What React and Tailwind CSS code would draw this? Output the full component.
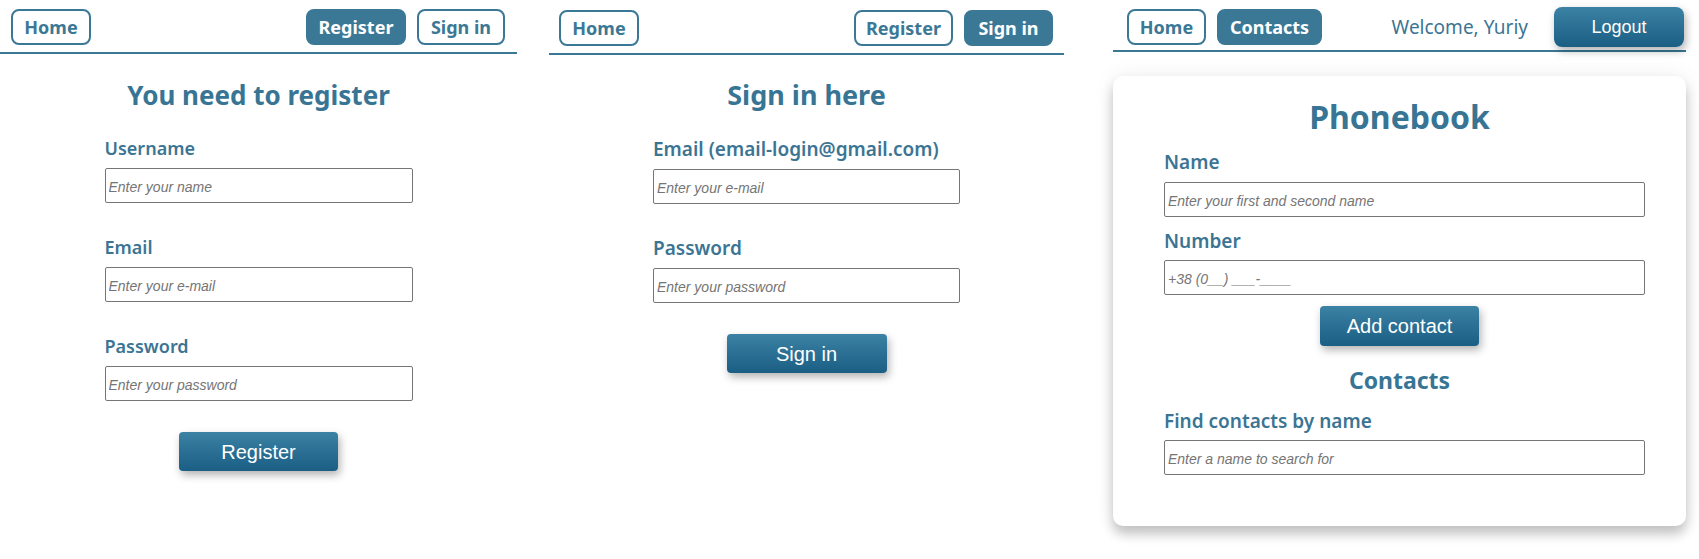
import React from 'react';

const ui = { fontFamily: '"Noto Sans", "Open Sans", sans-serif' };
const arial = { fontFamily: '"Liberation Sans", Arial, sans-serif' };

function NavLink({ children, active, className = '' }) {
  return (
    <a
      href="#"
      style={ui}
      className={`h-[36px] flex items-center justify-center rounded-lg border-2 border-[#3b7896] text-[18px] font-bold leading-none ${
        active ? 'bg-[#3b7896] text-white' : 'bg-white text-[#3b7896]'
      } ${className}`}
    >
      {children}
    </a>
  );
}

function Field({ label, placeholder, labelClass = 'mb-2 text-[18px]', className = '' }) {
  return (
    <label className={`flex flex-col ${className}`}>
      <span style={ui} className={`font-semibold leading-[24px] text-[#3b7593] ${labelClass}`}>
        {label}
      </span>
      <input
        type="text"
        placeholder={placeholder}
        style={arial}
        className="h-[35px] w-full rounded-[2px] border border-[#767676] bg-white pl-[3px] pt-[2px] text-[14px] text-gray-800 outline-none placeholder:italic placeholder:text-[#757575]"
      />
    </label>
  );
}

function BlueButton({ children, className = '' }) {
  return (
    <button
      style={arial}
      className={`rounded-[4px] bg-gradient-to-b from-[#3b82a4] to-[#1a5e84] text-white shadow-[2px_4px_8px_rgba(0,0,0,0.3)] ${className}`}
    >
      {children}
    </button>
  );
}

function Heading({ children, className = '' }) {
  return (
    <h1 style={ui} className={`text-center font-bold text-[#387594] ${className}`}>
      {children}
    </h1>
  );
}

function RegisterPage() {
  return (
    <div className="w-[517px] shrink-0">
      <nav className="flex items-center border-b-2 border-[#3b7896] pl-[11px] pr-[12px] pt-[9px] pb-[7px]">
        <NavLink className="w-[80px]">Home</NavLink>
        <div className="flex-1" />
        <NavLink active className="w-[100px]">Register</NavLink>
        <NavLink className="ml-[11px] w-[88px]">Sign in</NavLink>
      </nav>
      <Heading className="mt-[24px] text-[26px] leading-[34px]">You need to register</Heading>
      <form className="mx-auto mt-[24px] flex w-[308px] flex-col">
        <Field label="Username" placeholder="Enter your name" />
        <Field label="Email" placeholder="Enter your e-mail" className="mt-[32px]" />
        <Field label="Password" placeholder="Enter your password" className="mt-[32px]" />
        <BlueButton className="mx-auto mt-[31px] h-[39px] w-[159px] text-[20px]">Register</BlueButton>
      </form>
    </div>
  );
}

function SignInPage() {
  const lbl = 'mb-2 text-[19px]';
  return (
    <div className="ml-[32px] w-[515px] shrink-0">
      <nav className="flex items-center border-b-2 border-[#3b7896] pl-[10px] pr-[11px] pt-[10px] pb-[7px]">
        <NavLink className="w-[80px]">Home</NavLink>
        <div className="flex-1" />
        <NavLink className="w-[99px]">Register</NavLink>
        <NavLink active className="ml-[11px] w-[89px]">Sign in</NavLink>
      </nav>
      <Heading className="mt-[23px] text-[27px] leading-[34px]">Sign in here</Heading>
      <form className="mx-auto mt-[25px] flex w-[307px] flex-col">
        <Field label="Email (email-login@gmail.com)" placeholder="Enter your e-mail" labelClass={lbl} />
        <Field label="Password" placeholder="Enter your password" labelClass={lbl} className="mt-[32px]" />
        <BlueButton className="mx-auto mt-[31px] h-[39px] w-[160px] text-[20px]">Sign in</BlueButton>
      </form>
    </div>
  );
}

function ContactsPage() {
  return (
    <div className="ml-[49px] w-[573px] shrink-0">
      <nav className="flex items-center border-b-2 border-[#3b7896] pl-[14px] pr-[2px] pt-[7px] pb-[3px]">
        <NavLink className="w-[79px]">Home</NavLink>
        <NavLink active className="ml-[11px] w-[105px]">Contacts</NavLink>
        <div className="flex-1" />
        <span style={ui} className="text-[19px] text-[#3b7593]">Welcome, Yuriy</span>
        <BlueButton className="ml-[26px] h-[40px] w-[130px] rounded-lg text-[18px]">Logout</BlueButton>
      </nav>
      <section className="mt-[24px] flex flex-col items-center rounded-[10px] bg-white pt-[21px] pb-[51px] shadow-[0_8px_12px_rgba(0,0,0,0.22),0_0_22px_rgba(0,0,0,0.07)]">
        <Heading className="text-[32px] leading-[40px]">Phonebook</Heading>
        <div className="mt-[12px] ml-[10px] flex w-[481px] flex-col">
          <Field label="Name" placeholder="Enter your first and second name" labelClass="mb-[7px] leading-[26px] text-[19px]" />
          <Field label="Number" placeholder="+38 (0__) ___-____" labelClass="mb-[6px] leading-[26px] text-[19px]" className="mt-[11px]" />
        </div>
        <BlueButton className="mt-[11px] h-[40px] w-[159px] text-[20px]">Add contact</BlueButton>
        <Heading className="mt-[19px] text-[23px] leading-[30px]">Contacts</Heading>
        <div className="mt-[13px] ml-[10px] flex w-[481px] flex-col">
          <Field label="Find contacts by name" placeholder="Enter a name to search for" labelClass="mb-[6px] leading-[26px] text-[19px]" />
        </div>
      </section>
    </div>
  );
}

export default function App() {
  return (
    <div className="flex h-[559px] w-[1699px] items-start bg-white">
      <RegisterPage />
      <SignInPage />
      <ContactsPage />
    </div>
  );
}
